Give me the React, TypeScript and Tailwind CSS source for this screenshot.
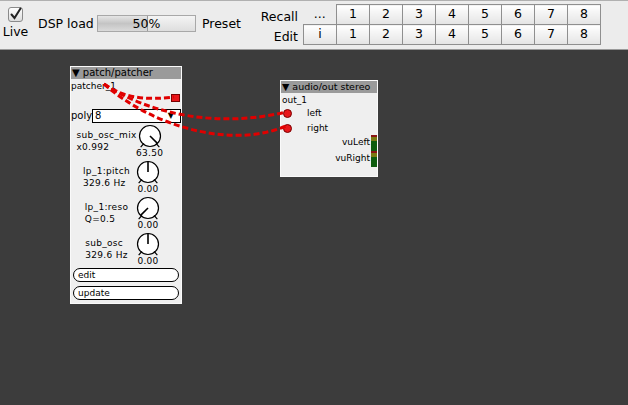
import React from 'react'

const font = { fontFamily: '"DejaVu Sans", "Liberation Sans", sans-serif' }

function Knob({ angle }: { angle: number }) {
  // angle in degrees, 0 = pointing up, positive = clockwise
  const r = 10.5
  const cx = 12
  const cy = 12
  const rad = (angle * Math.PI) / 180
  const px = cx + Math.sin(rad) * r
  const py = cy - Math.cos(rad) * r
  const tick = (a: number) => {
    const t = (a * Math.PI) / 180
    return {
      x1: cx + Math.sin(t) * (r - 1),
      y1: cy - Math.cos(t) * (r - 1),
      x2: cx + Math.sin(t) * (r + 4),
      y2: cy - Math.cos(t) * (r + 4),
    }
  }
  const l = tick(-140)
  const rr = tick(140)
  return (
    <svg width="24" height="26" viewBox="0 0 24 26">
      <circle cx={cx} cy={cy} r={r} fill="#fff" stroke="#000" strokeWidth="1.2" />
      <line {...l} stroke="#000" strokeWidth="1.2" />
      <line {...rr} stroke="#000" strokeWidth="1.2" />
      <line x1={cx} y1={cy} x2={px} y2={py} stroke="#000" strokeWidth="1.6" />
    </svg>
  )
}

const knobs = [
  { label: 'sub_osc_mix', sub: 'x0.992', value: '63.50', angle: 135 },
  { label: 'lp_1:pitch', sub: '329.6 Hz', value: '0.00', angle: 0 },
  { label: 'lp_1:reso', sub: 'Q=0.5', value: '0.00', angle: -135 },
  { label: 'sub_osc', sub: '329.6 Hz', value: '0.00', angle: 0 },
]

function Cell({ children, plain }: { children: React.ReactNode; plain?: boolean }) {
  return (
    <td
      className={
        plain
          ? 'w-[32px] h-[20px] p-0 text-center'
          : 'w-[33px] h-[20px] p-0 text-center border border-[#8f8f8f] bg-gradient-to-b from-white to-[#e4e4e4]'
      }
    >
      {children}
    </td>
  )
}

function Dot() {
  return <div className="w-[9px] h-[9px] rounded-full bg-[#e8161a] border border-[#7a0000]" />
}

function Vu() {
  return (
    <div className="w-[6px] h-[16px] flex flex-col">
      <div className="h-[2px] bg-[#8a1414]" />
      <div className="h-[4px] bg-[#7a7a12]" />
      <div className="flex-1 bg-[#0e5c0e]" />
    </div>
  )
}

export default function App() {
  const nums = [1, 2, 3, 4, 5, 6, 7, 8]
  return (
    <div className="w-[628px] h-[405px] flex flex-col overflow-hidden" style={font}>
      {/* toolbar */}
      <div className="h-[50px] bg-[#ececec] border-t border-b border-t-[#b0b0b0] border-b-[#9a9a9a] flex text-[12.5px] text-black">
        <div className="w-[31px] flex flex-col items-center pt-[6px]">
          <svg width="15" height="15" viewBox="0 0 15 15">
            <defs>
              <linearGradient id="cb" x1="0" y1="0" x2="0" y2="1">
                <stop offset="0" stopColor="#ffffff" />
                <stop offset="1" stopColor="#dcdcdc" />
              </linearGradient>
            </defs>
            <rect x="0.5" y="0.5" width="14" height="14" rx="2.5" fill="url(#cb)" stroke="#8a8a8a" />
            <path d="M3.5 7.5 L6.5 11 L12.5 1.5" fill="none" stroke="#222" strokeWidth="2" strokeLinecap="round" />
          </svg>
          <span className="mt-[3px] leading-[14px]">Live</span>
        </div>
        <div className="ml-[7px] w-[59px] pt-[15px] leading-[16px]">DSP load</div>
        <div className="mt-[14px] w-[99px] h-[17px] border border-[#a8a8a8] relative bg-gradient-to-b from-[#f4f4f4] to-[#dedede] flex">
          <div className="w-[50px] h-full bg-gradient-to-b from-[#e6e6e6] via-[#c4c4c4] to-[#dadada] border-r border-[#9a9a9a]" />
          <span className="absolute inset-0 text-center leading-[15px]">50%</span>
        </div>
        <div className="ml-[6px] pt-[15px] leading-[16px]">Preset</div>
        <div className="ml-auto flex">
          <div className="w-[56px] flex flex-col items-end pt-[6px] leading-[20px] pr-[1px]">
            <span>Recall</span>
            <span>Edit</span>
          </div>
          <table className="border-collapse mt-[3px] mr-[27px] ml-[4px] h-[41px]">
            <tbody>
              <tr>
                <Cell plain>...</Cell>
                {nums.map((n) => (
                  <Cell key={n}>{n}</Cell>
                ))}
              </tr>
              <tr>
                <Cell>i</Cell>
                {nums.map((n) => (
                  <Cell key={n}>{n}</Cell>
                ))}
              </tr>
            </tbody>
          </table>
        </div>
      </div>

      {/* patch canvas */}
      <div className="flex-1 bg-[#3c3c3c] relative text-[9px] text-black">
        {/* patch/patcher object */}
        <div className="absolute left-[70px] top-[16px] w-[112px] h-[238px] bg-[#efefef] border border-[#fafafa] flex flex-col">
          <div className="h-[12px] bg-[#9a9a9a] text-[10px] leading-[12px] pl-[1px] whitespace-nowrap overflow-hidden">▼ patch/patcher</div>
          <div className="leading-[12px] mt-[1px]">patcher_1</div>
          <div className="h-[14px] flex justify-end pr-[1px] mt-[1px]">
            <div className="w-[9px] h-[8px] bg-[#e8161a] border border-[#7a0000] mt-[1px]" />
          </div>
          <div className="flex items-center mt-[1px]">
            <span className="w-[21px] text-[10px]">poly</span>
            <div className="flex-1 h-[14px] bg-white border border-black flex items-center justify-between px-[2px] text-[10px]">
              <span>8</span>
              <span className="text-[8px] pr-[4px]">▼</span>
            </div>
          </div>
          <div className="flex flex-col mt-[1px]">
            {knobs.map((k) => (
              <div key={k.label} className="h-[36px] flex">
                <div className="w-[65px] flex justify-center items-start pt-[5px] pl-[6px]">
                  <div className="flex flex-col leading-[12px] tracking-[0.3px]">
                    <span>{k.label}</span>
                    <span>{k.sub}</span>
                  </div>
                </div>
                <div className="flex flex-col items-center">
                  <Knob angle={k.angle} />
                  <span className="-mt-[2px] leading-[10px] tracking-[0.3px]">{k.value}</span>
                </div>
              </div>
            ))}
          </div>
          <div className="mx-[2px] h-[14px] border border-black rounded-full bg-white leading-[12px] pl-[4px]">edit</div>
          <div className="mt-[4px] mx-[2px] h-[14px] border border-black rounded-full bg-white leading-[12px] pl-[4px]">update</div>
        </div>

        {/* audio/out stereo object */}
        <div className="absolute left-[280px] top-[30px] w-[98px] h-[97px] bg-[#efefef] border border-[#fafafa] flex flex-col">
          <div className="h-[12px] bg-[#9a9a9a] text-[9.5px] leading-[12px] pl-[1px] whitespace-nowrap overflow-hidden">▼ audio/out stereo</div>
          <div className="leading-[12px] mt-[1px] pl-[1px]">out_1</div>
          <div className="flex items-center h-[15px] pl-[2px]">
            <Dot />
            <span className="ml-[15px]">left</span>
          </div>
          <div className="flex items-center h-[15px] pl-[2px]">
            <Dot />
            <span className="ml-[15px]">right</span>
          </div>
          <div className="flex justify-end items-center h-[16px] mt-[-1px]">
            <span className="mr-[1px]">vuLeft</span>
            <Vu />
          </div>
          <div className="flex justify-end items-center h-[16px]">
            <span className="mr-[1px]">vuRight</span>
            <Vu />
          </div>
        </div>

        {/* cables */}
        <svg className="absolute inset-0 pointer-events-none" width="628" height="355">
          <g fill="none" stroke="#e00000" strokeWidth="3" strokeDasharray="6 3">
            <path d="M104 34 C 125 49, 148 50, 174 47" />
            <path d="M104 34 C 150 65, 220 78, 286 62" />
            <path d="M104 34 C 150 75, 230 100, 286 76" />
          </g>
        </svg>
      </div>
    </div>
  )
}
